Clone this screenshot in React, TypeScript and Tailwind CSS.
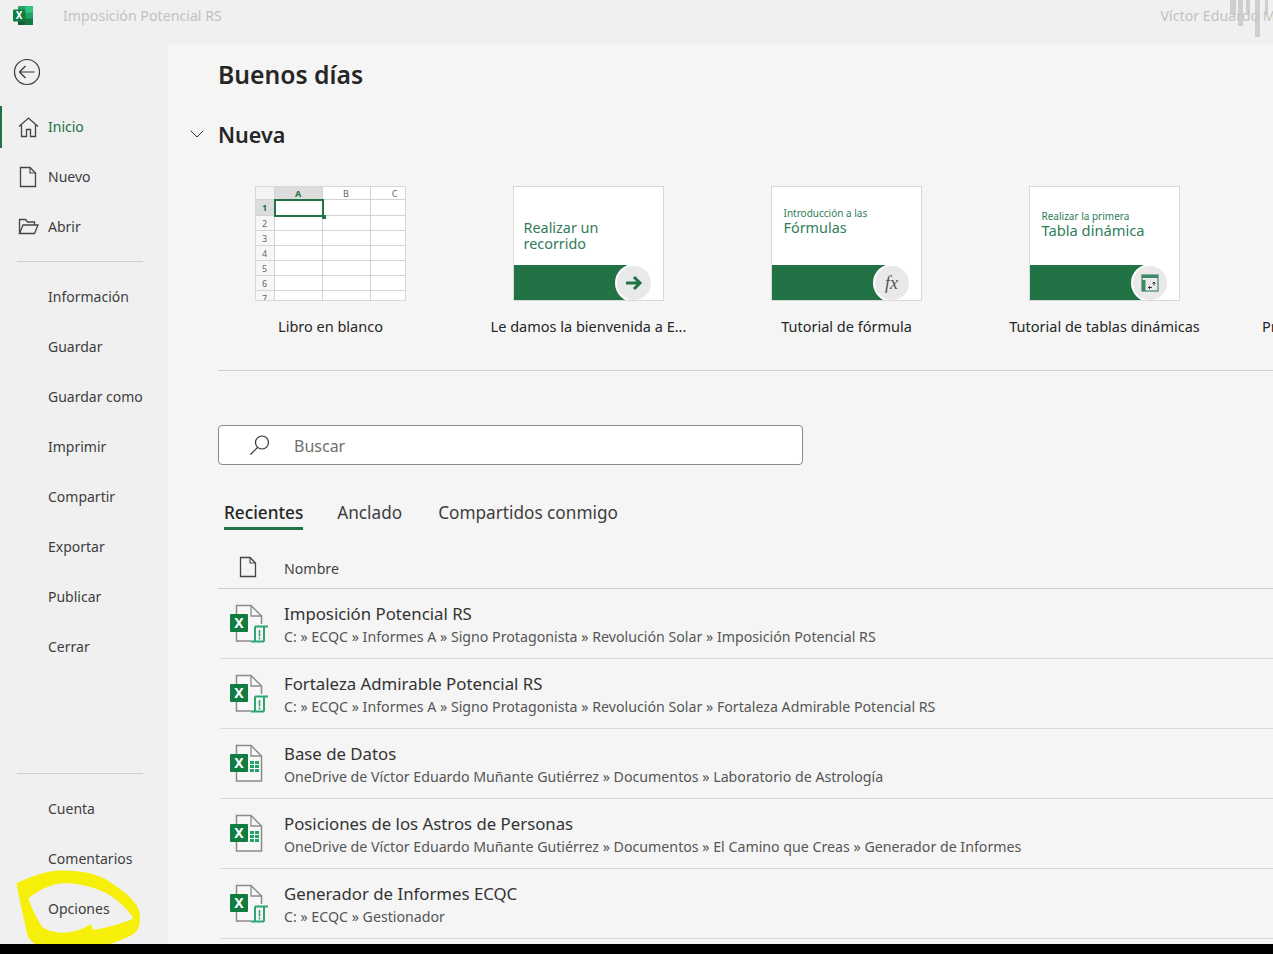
import { ChevronDown } from "lucide-react";

const font = "font-['Noto_Sans',sans-serif]";

const topItems = ["Información", "Guardar", "Guardar como", "Imprimir", "Compartir", "Exportar", "Publicar", "Cerrar"];
const bottomItems = ["Cuenta", "Comentarios", "Opciones"];

type Recent = { name: string; path: string; kind: "scroll" | "grid" };

const recents: Recent[] = [
  {
    name: "Imposición Potencial RS",
    path: "C: » ECQC » Informes A » Signo Protagonista » Revolución Solar » Imposición Potencial RS",
    kind: "scroll",
  },
  {
    name: "Fortaleza Admirable Potencial RS",
    path: "C: » ECQC » Informes A » Signo Protagonista » Revolución Solar » Fortaleza Admirable Potencial RS",
    kind: "scroll",
  },
  {
    name: "Base de Datos",
    path: "OneDrive de Víctor Eduardo Muñante Gutiérrez » Documentos » Laboratorio de Astrología",
    kind: "grid",
  },
  {
    name: "Posiciones de los Astros de Personas",
    path: "OneDrive de Víctor Eduardo Muñante Gutiérrez » Documentos » El Camino que Creas » Generador de Informes",
    kind: "grid",
  },
  { name: "Generador de Informes ECQC", path: "C: » ECQC » Gestionador", kind: "scroll" },
];

function ExcelLogo() {
  return (
    <svg width="21" height="21" viewBox="0 0 21 21" className="block">
      <rect x="5" y="1" width="15" height="19" rx="1" fill="#21a366" />
      <rect x="12.5" y="1" width="7.5" height="6.5" fill="#33c481" />
      <rect x="5" y="7.5" width="7.5" height="6" fill="#107c41" />
      <rect x="12.5" y="13.5" width="7.5" height="6.5" fill="#107c41" />
      <rect x="5" y="13.5" width="7.5" height="6.5" fill="#185c37" />
      <rect x="0" y="4.5" width="12" height="12" rx="1" fill="#107c41" />
      <text x="6" y="14" textAnchor="middle" fontSize="10" fontWeight="700" fill="#fff" fontFamily="Noto Sans">
        X
      </text>
    </svg>
  );
}

function PageIcon() {
  return (
    <svg width="18" height="22" viewBox="0 0 18 22" fill="none" className="block">
      <path d="M1.5 1.5h9.5l5.5 5.5v13.5h-15z" stroke="#444" strokeWidth="1.3" />
      <path d="M11 1.5V7h5.5" stroke="#444" strokeWidth="1.1" />
    </svg>
  );
}

function HomeIcon() {
  return (
    <svg width="21" height="21" viewBox="0 0 21 21" fill="none" className="block">
      <path d="M1 9.5 10.5 1 20 9.5" stroke="#444" strokeWidth="1.3" />
      <path d="M3.5 8v11.5h5v-7h4v7h5V8" stroke="#444" strokeWidth="1.3" />
    </svg>
  );
}

function FolderIcon() {
  return (
    <svg width="21" height="18" viewBox="0 0 21 18" fill="none" className="block">
      <path d="M1.5 15.5V1.5h6l2 2.5h7v3" stroke="#444" strokeWidth="1.3" />
      <path d="M1.5 15.5 5 7h15l-3.5 8.5z" stroke="#444" strokeWidth="1.3" />
    </svg>
  );
}

function BackIcon() {
  return (
    <svg width="28" height="28" viewBox="0 0 28 28" fill="none" className="block">
      <circle cx="14" cy="14" r="12.5" stroke="#333" strokeWidth="1.2" />
      <path d="M21.5 14H6.5M12.5 8l-6 6 6 6" stroke="#333" strokeWidth="1.2" />
    </svg>
  );
}

function FileIcon({ kind }: { kind: "scroll" | "grid" }) {
  return (
    <svg width="40" height="40" viewBox="0 0 40 40" fill="none" className="block">
      <path d="M6.5 1.5H21L31.5 12v25H6.5z" fill="#f8f8f8" stroke="#8a8a8a" strokeWidth="1.5" />
      <path d="M21 1.5V12h10.5" stroke="#8a8a8a" strokeWidth="1.3" />
      <rect x="0" y="10" width="18" height="18" rx="1" fill="#107c41" />
      <text x="9" y="24" textAnchor="middle" fontSize="14" fontWeight="700" fill="#fff" fontFamily="Noto Sans">
        X
      </text>
      {kind === "grid" ? (
        <g fill="#21a366">
          <rect x="20" y="17" width="4" height="3" />
          <rect x="25" y="17" width="4" height="3" />
          <rect x="20" y="21" width="4" height="3" />
          <rect x="25" y="21" width="4" height="3" />
          <rect x="20" y="25" width="4" height="3" />
          <rect x="25" y="25" width="4" height="3" />
        </g>
      ) : (
        <g>
          <rect x="21" y="20" width="18" height="20" fill="#f5f5f5" />
          <path d="M25 22.5h13M25 22.5V37.5M34 22.5V37.5M21 37.5h13" stroke="#2fa572" strokeWidth="2" />
          <path d="M29.5 26v6.5M29.5 33.5v2" stroke="#2fa572" strokeWidth="1.6" />
        </g>
      )}
    </svg>
  );
}

function Scribble() {
  return (
    <svg className="absolute left-0 top-[840px]" width="150" height="114" viewBox="0 0 450 342">
      <path
        fillRule="evenodd"
        fill="#f6ef0a"
        d="M50 130C90 110 130 95 170 92C230 88 290 100 320 120C360 145 410 180 418 215C424 250 415 275 395 285C370 300 340 308 320 315L110 315C95 305 85 295 82 285C75 245 60 195 50 130ZM85 175C110 155 150 132 190 130C240 128 290 145 320 160C355 180 385 210 400 235C385 245 320 265 280 270L272 252C260 262 225 278 190 278C160 278 135 270 125 258C110 235 95 205 85 175Z"
      />
    </svg>
  );
}

function SheetThumb() {
  const rows = [1, 2, 3, 4, 5, 6, 7];
  return (
    <div className="relative h-[115px] w-[151px] overflow-hidden border border-[#d9d9d9] bg-white">
      <div className="grid grid-cols-[19px_48px_48px_1fr] text-[9px] leading-none text-[#666]">
        <div className="h-[13px] border-b border-r border-[#d4d4d4] bg-[#f3f3f3]" />
        <div className="flex h-[13px] items-center justify-center border-b border-r border-[#d4d4d4] bg-[#dcdcdc] font-bold text-[#217346]">
          A
        </div>
        <div className="flex h-[13px] items-center justify-center border-b border-r border-[#d4d4d4]">B</div>
        <div className="flex h-[13px] items-center justify-end border-b border-[#d4d4d4] pr-[7px]">C</div>
        {rows.map((r) => (
          <div key={r} className="contents">
            <div
              className={`flex items-center justify-center border-b border-r border-[#d4d4d4] ${
                r === 1 ? "h-[16px] bg-[#dcdcdc] font-bold text-[#217346]" : "h-[15px] bg-[#f7f7f7]"
              }`}
            >
              {r}
            </div>
            <div className="border-b border-r border-[#d4d4d4]" />
            <div className="border-b border-r border-[#d4d4d4]" />
            <div className="border-b border-[#d4d4d4]" />
          </div>
        ))}
      </div>
      <div className="absolute left-[18px] top-[12px] h-[18px] w-[50px] border-2 border-[#217346]" />
      <div className="absolute left-[66px] top-[28px] h-[4px] w-[4px] bg-[#217346]" />
    </div>
  );
}

function PromoThumb({
  small,
  big,
  badge,
  top,
  bigSize = "text-[14.4px]",
}: {
  small?: string;
  big: string;
  badge: React.ReactNode;
  top: string;
  bigSize?: string;
}) {
  return (
    <div className="flex h-[115px] w-[151px] flex-col overflow-hidden border border-[#d9d9d9] bg-white">
      <div className={`flex h-[78px] flex-col text-[#2f7d58] ${top}`}>
        {small && <span className="text-[10px] leading-[12px]">{small}</span>}
        <span className={`${bigSize} ${small ? "leading-[17px]" : "leading-[16px]"}`}>{big}</span>
      </div>
      <div className="relative flex-1 bg-[#217346]">
        <div className="absolute right-0 top-0 h-full w-[28px] bg-white" />
        <div className="absolute right-[10px] top-[-1px] box-content flex h-[34px] w-[34px] items-center justify-center rounded-full border-2 border-white bg-[#e9e9e9]">
          {badge}
        </div>
      </div>
    </div>
  );
}

const templates = [
  { label: "Libro en blanco", thumb: <SheetThumb /> },
  {
    label: "Le damos la bienvenida a E...",
    thumb: (
      <PromoThumb
        big="Realizar un recorrido"
        top="pl-[10px] pr-[40px] pt-[33px]"
        badge={
          <svg width="18" height="16" viewBox="0 0 18 16" fill="none">
            <path d="M1 8h14M9 2l6 6-6 6" stroke="#217346" strokeWidth="3" />
          </svg>
        }
      />
    ),
  },
  {
    label: "Tutorial de fórmula",
    thumb: (
      <PromoThumb
        small="Introducción a las"
        big="Fórmulas"
        top="pl-[12px] pt-[20px]"
        badge={<span className="font-['Liberation_Serif',serif] text-[18px] italic text-[#555]">fx</span>}
      />
    ),
  },
  {
    label: "Tutorial de tablas dinámicas",
    thumb: (
      <PromoThumb
        small="Realizar la primera"
        big="Tabla dinámica"
        bigSize="text-[14.7px]"
        top="pl-[12px] pt-[23px]"
        badge={
          <svg width="18" height="18" viewBox="0 0 18 18" fill="none">
            <rect x="1" y="1" width="16" height="16" stroke="#3f8a66" strokeWidth="1.2" />
            <rect x="1" y="1" width="16" height="3" fill="#3f8a66" />
            <rect x="1" y="6" width="3.5" height="11" fill="#3f8a66" />
            <path d="M7.5 13.5h3.5M9 12l-1.5 1.5L9 15M13 8v3.5M11.5 9.5 13 8l1.5 1.5" stroke="#333" strokeWidth="1" />
          </svg>
        }
      />
    ),
  },
];

function NavItem({ label, active, icon }: { label: string; active?: boolean; icon?: React.ReactNode }) {
  return (
    <div className="relative flex h-[50px] items-center pl-[48px] text-[14px] text-[#3d3d3d]">
      {active && <div className="absolute left-0 top-[4px] h-[42px] w-[2px] bg-[#217346]" />}
      {icon && <span className="absolute left-[17px] flex w-[22px] justify-center">{icon}</span>}
      <span className={active ? "mt-[-2px] text-[#217346]" : "mt-[-2px]"}>{label}</span>
    </div>
  );
}

export default function App() {
  return (
    <div className={`${font} relative flex h-[954px] w-full flex-col overflow-hidden bg-[#f0f0f0]`}>
      <header className="relative flex h-[44px] shrink-0 items-center overflow-hidden pb-[12px]">
        <span className="ml-[13px] mt-[-2px]">
          <ExcelLogo />
        </span>
        <span className="ml-[29px] text-[14.2px] text-[#c2c2c2]">Imposición Potencial RS</span>
        <span className="ml-auto mr-[-50px] whitespace-nowrap text-[14.2px] text-[#c2c2c2]">Víctor Eduardo Muñante</span>
        <div className="absolute right-[5px] top-0 flex items-start">
          <div className="h-[15px] w-[6px] bg-[#c6c6c6]/80" />
          <div className="ml-[2px] h-[26px] w-[5px] bg-[#c6c6c6]/80" />
          <div className="ml-[3px] h-[15px] w-[4px] bg-[#c6c6c6]/80" />
          <div className="ml-[5px] h-[37px] w-[5px] bg-[#c6c6c6]/80" />
          <div className="ml-[5px] h-[15px] w-[3px] bg-[#c6c6c6]/80" />
        </div>
      </header>

      <div className="flex min-h-0 flex-1">
        <aside className="flex w-[168px] shrink-0 flex-col">
          <div className="flex h-[58px] items-center pb-[2px] pl-[13px]">
            <BackIcon />
          </div>
          <NavItem label="Inicio" active icon={<HomeIcon />} />
          <NavItem label="Nuevo" icon={<PageIcon />} />
          <NavItem label="Abrir" icon={<FolderIcon />} />
          <div className="ml-[17px] mr-[25px] mt-[9px] h-px bg-[#cfcfcf]" />
          <div className="mt-[10px]">
            {topItems.map((item) => (
              <NavItem key={item} label={item} />
            ))}
          </div>
          <div className="mt-auto">
            <div className="mb-[10px] ml-[17px] mr-[25px] h-px bg-[#cfcfcf]" />
            {bottomItems.map((item) => (
              <NavItem key={item} label={item} />
            ))}
          </div>
          <div className="h-[10px] shrink-0" />
        </aside>

        <main className="min-w-0 flex-1 overflow-hidden bg-[#f5f5f5] pb-[6px]">
          <h1 className="ml-[50px] mt-[13px] text-[24.7px] font-semibold leading-[36px] text-[#262626]">Buenos días</h1>
          <div className="mt-[24px] flex h-[36px] items-center">
            <span className="ml-[17px] mt-[-2px] w-[33px]">
              <ChevronDown size={24} strokeWidth={1} color="#333" />
            </span>
            <h2 className="text-[21.5px] font-semibold text-[#262626]">Nueva</h2>
          </div>

          <div className="ml-[33px] mt-[33px] flex">
            {templates.map((t) => (
              <div key={t.label} className="flex w-[258px] shrink-0 flex-col items-center">
                {t.thumb}
                <span className="ml-[1px] mt-[15px] text-[14.5px] leading-[20px] text-[#262626]">{t.label}</span>
              </div>
            ))}
            <div className="w-[200px] shrink-0 pl-[29px] pt-[130px] text-[14.5px] leading-[20px] text-[#262626]">Presentación</div>
          </div>

          <div className="ml-[50px] mt-[34px] h-px bg-[#cfcfcf]" />

          <div className="ml-[50px] mt-[54px] flex h-[40px] w-[585px] items-center rounded-[4px] border border-[#8a8a8a] bg-white">
            <svg className="ml-[29px]" width="24" height="24" viewBox="0 0 24 24" fill="none">
              <circle cx="14" cy="9.5" r="6.5" stroke="#333" strokeWidth="1.2" />
              <path d="M9.5 14.5 2.5 21.5" stroke="#333" strokeWidth="1.2" />
            </svg>
            <span className="ml-[22px] pt-[1px] text-[16px] text-[#707070]">Buscar</span>
          </div>

          <div className="ml-[56px] mt-[33px] flex h-[31px] items-start text-[17.2px] leading-[29px] text-[#3d3d3d]">
            <span className="border-b-[3px] border-[#217346] font-medium text-[#262626]">Recientes</span>
            <span className="ml-[34px]">Anclado</span>
            <span className="ml-[36px]">Compartidos conmigo</span>
          </div>

          <div className="ml-[50px] mt-[9px] flex h-[51px] items-center border-b border-[#cfcfcf] pt-[12px] text-[14.2px] text-[#444]">
            <span className="mt-[-4px] flex w-[60px] justify-center">
              <PageIcon />
            </span>
            <span className="ml-[6px]">Nombre</span>
          </div>

          {recents.map((r) => (
            <div key={r.name} className="ml-[52px] flex h-[70px] items-center border-b border-[#d9d9d9]">
              <span className="ml-[10px] w-[54px] shrink-0">
                <FileIcon kind={r.kind} />
              </span>
              <div className="flex flex-col whitespace-nowrap">
                <span className="text-[16.8px] leading-[27px] text-[#333]">{r.name}</span>
                <span className="text-[14.2px] leading-[20px] text-[#555]">{r.path}</span>
              </div>
            </div>
          ))}
        </main>
      </div>

      <Scribble />
      <div className="relative h-[10px] shrink-0 bg-black" />
    </div>
  );
}
